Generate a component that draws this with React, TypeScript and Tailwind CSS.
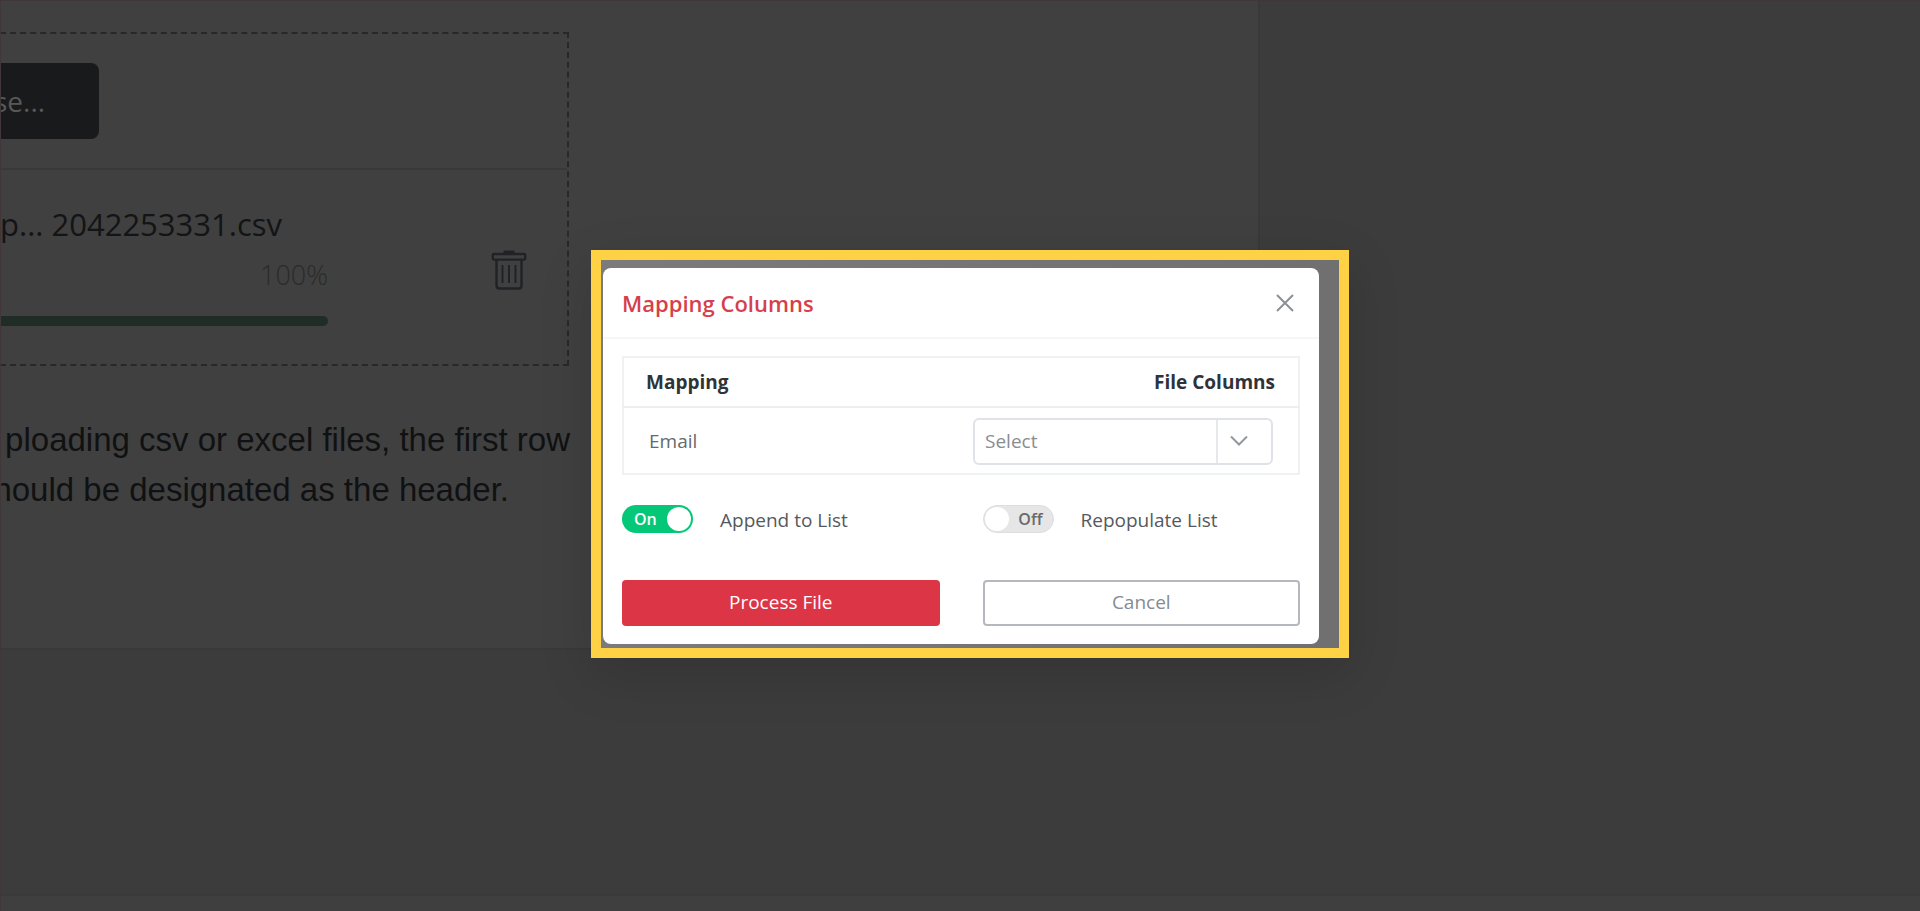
import { useState } from "react";

const uiFont = "font-['Segoe_UI','Open_Sans',sans-serif]";

function TrashIcon() {
  return (
    <svg viewBox="0 0 36 40" className="h-10 w-9" fill="none" stroke="#202226" strokeWidth="2.4">
      <path d="M12.5 2h11" strokeWidth="3" />
      <rect x="1.8" y="4" width="32.4" height="5.6" rx="1" />
      <path d="M5.5 10v25.500q0 3 3 3h19q3 0 3-3V10" />
      <path d="M11.500 15v18M18 15v18M24.500 15v18" strokeWidth="2" />
    </svg>
  );
}

function Switch({ id, label, checked, onChange }: { id: string; label: string; checked: boolean; onChange: (value: boolean) => void }) {
  return (
    <label htmlFor={id} className="flex flex-1 cursor-pointer items-center gap-[27px] text-[19px] leading-7 text-[#55595d]">
      <input id={id} type="checkbox" role="switch" className="sr-only" checked={checked} onChange={(event) => onChange(event.target.checked)} />
      {checked ? (
        <span className="flex h-7 w-[71px] items-center justify-between rounded-full bg-[#04c877] pr-0.5 pl-3 text-[16px] font-semibold text-white">
          On<span className="size-6 rounded-full bg-white" />
        </span>
      ) : (
        <span className="flex h-7 w-[71px] items-center justify-between rounded-full border border-[#dcdee1] bg-[#e6e6e6] pr-2.5 pl-px text-[16px] font-semibold text-[#6a6a6a]">
          <span className="size-6 rounded-full bg-white" />Off
        </span>
      )}
      <span className="pt-0.5">{label}</span>
    </label>
  );
}

function UploadPanel() {
  return (
    <section className="w-[65.6%] border-r-2 border-b-2 border-[#393939] bg-[#404040] pt-8 pb-[133px]">
      <div className="w-[569px] border-2 border-l-0 border-dashed border-[#26292c]">
        <div className="border-b-2 border-[#393939] py-[29px]">
          <button type="button" className={`${uiFont} h-[76px] w-[99px] rounded-r-lg bg-[#191a1b] text-left -indent-1.5 text-[28px] text-[#57585a]`}>se...</button>
        </div>
        <div className={`${uiFont} flex items-center pt-7 pb-[38px]`}>
          <div className="w-[328px]">
            <p className="pt-px pr-[46px] text-right text-[31px] leading-[50px] whitespace-nowrap text-[#131415]">p... 2042253331.csv</p>
            <p className="pt-px text-right text-[27px] leading-[50px] font-light text-[#2b2b2b]">100%</p>
            <div className="mt-4 h-2.5 rounded-r-full bg-[#202d27]" role="progressbar" aria-valuenow={100} />
          </div>
          <button type="button" aria-label="Delete file" className="ml-[163px] pt-4"><TrashIcon /></button>
        </div>
      </div>
      <p className="w-[570px] pt-[49px] text-right font-['Liberation_Sans',Arial,sans-serif] text-[33px] leading-[50px] whitespace-nowrap text-[#101112]">
        ploading csv or excel files, the first row
        <span className="-ml-4 block pr-[61px]">hould be designated as the header.</span>
      </p>
    </section>
  );
}

function MappingDialog() {
  const [append, setAppend] = useState(true);
  const [repopulate, setRepopulate] = useState(false);

  return (
    <div className="w-[758px] border-10 border-[#ffd145] bg-linear-to-r from-[#7b7b7b] to-[#707070] pt-2 pr-5 pb-1 pl-0.5 shadow-[0_16px_50px_rgba(0,0,0,0.14)]">
      <div role="dialog" aria-labelledby="dialog-title" className={`${uiFont} rounded-lg bg-white`}>
        <header className="flex h-[71px] items-center justify-between border-b-2 border-[#f5f6f7] pt-0.5 pr-6 pl-[19px]">
          <h2 id="dialog-title" className="text-[22px] leading-8 font-semibold text-[#d63f4b]">Mapping Columns</h2>
          <button type="button" aria-label="Close">
            <svg viewBox="0 0 20 20" className="size-5" stroke="#8b9096" strokeWidth="2"><path d="M2 2l16 16M18 2L2 18" /></svg>
          </button>
        </header>
        <div className="px-[19px] pt-[17px] pb-[18px]">
          <table className="w-full border-2 border-[#f0f1f3] text-[19px]">
            <thead>
              <tr className="h-[50px] border-b-2 border-[#eceef0] text-[#2f3338]">
                <th className="pt-0.5 pl-[22px] text-left font-bold">Mapping</th>
                <th className="pt-0.5 pr-[23px] text-right font-bold">File Columns</th>
              </tr>
            </thead>
            <tbody>
              <tr className="h-[67px] text-[#66696c]">
                <td className="pt-0.5 pl-[25px]"><label htmlFor="email-column">Email</label></td>
                <td className="pt-0.5 pr-[25px]">
                  <div className="relative ml-auto w-[300px]">
                    <select id="email-column" className="h-[47px] w-full appearance-none rounded-md border-2 border-[#dfe2e6] bg-white pl-[10px] text-[#8a8d90]"><option>Select</option></select>
                    <span className="pointer-events-none absolute inset-y-0.5 right-0.5 flex w-[55px] items-center border-l-2 border-[#e6e8eb] pl-3">
                      <svg viewBox="0 0 18 12" className="h-3 w-[18px]" fill="none" stroke="#95989b" strokeWidth="2"><path d="M1 1.500l8 8 8-8" /></svg>
                    </span>
                  </div>
                </td>
              </tr>
            </tbody>
          </table>
          <div className="flex gap-[43px] pt-[29px]">
            <Switch id="append" label="Append to List" checked={append} onChange={setAppend} />
            <Switch id="repopulate" label="Repopulate List" checked={repopulate} onChange={setRepopulate} />
          </div>
          <div className="grid grid-cols-2 gap-[43px] pt-[46px] text-[19px]">
            <button type="button" className="h-[46px] rounded bg-[#dc3546] text-white">Process File</button>
            <button type="button" className="h-[46px] rounded-sm border-2 border-[#b5b9bd] text-[#858b91]">Cancel</button>
          </div>
        </div>
      </div>
    </div>
  );
}

export default function App() {
  return (
    <div className="relative flex min-h-screen flex-col overflow-hidden bg-[#3c3c3c]">
      <main className="flex-1"><UploadPanel /></main>
      <footer className="h-[17px] border-t-2 border-[#393a39] bg-[#3f3f3f]" />
      <div className="absolute inset-0 flex items-center justify-center border-t border-l border-[#413639] pb-[5px] pl-[19px]">
        <MappingDialog />
      </div>
    </div>
  );
}
